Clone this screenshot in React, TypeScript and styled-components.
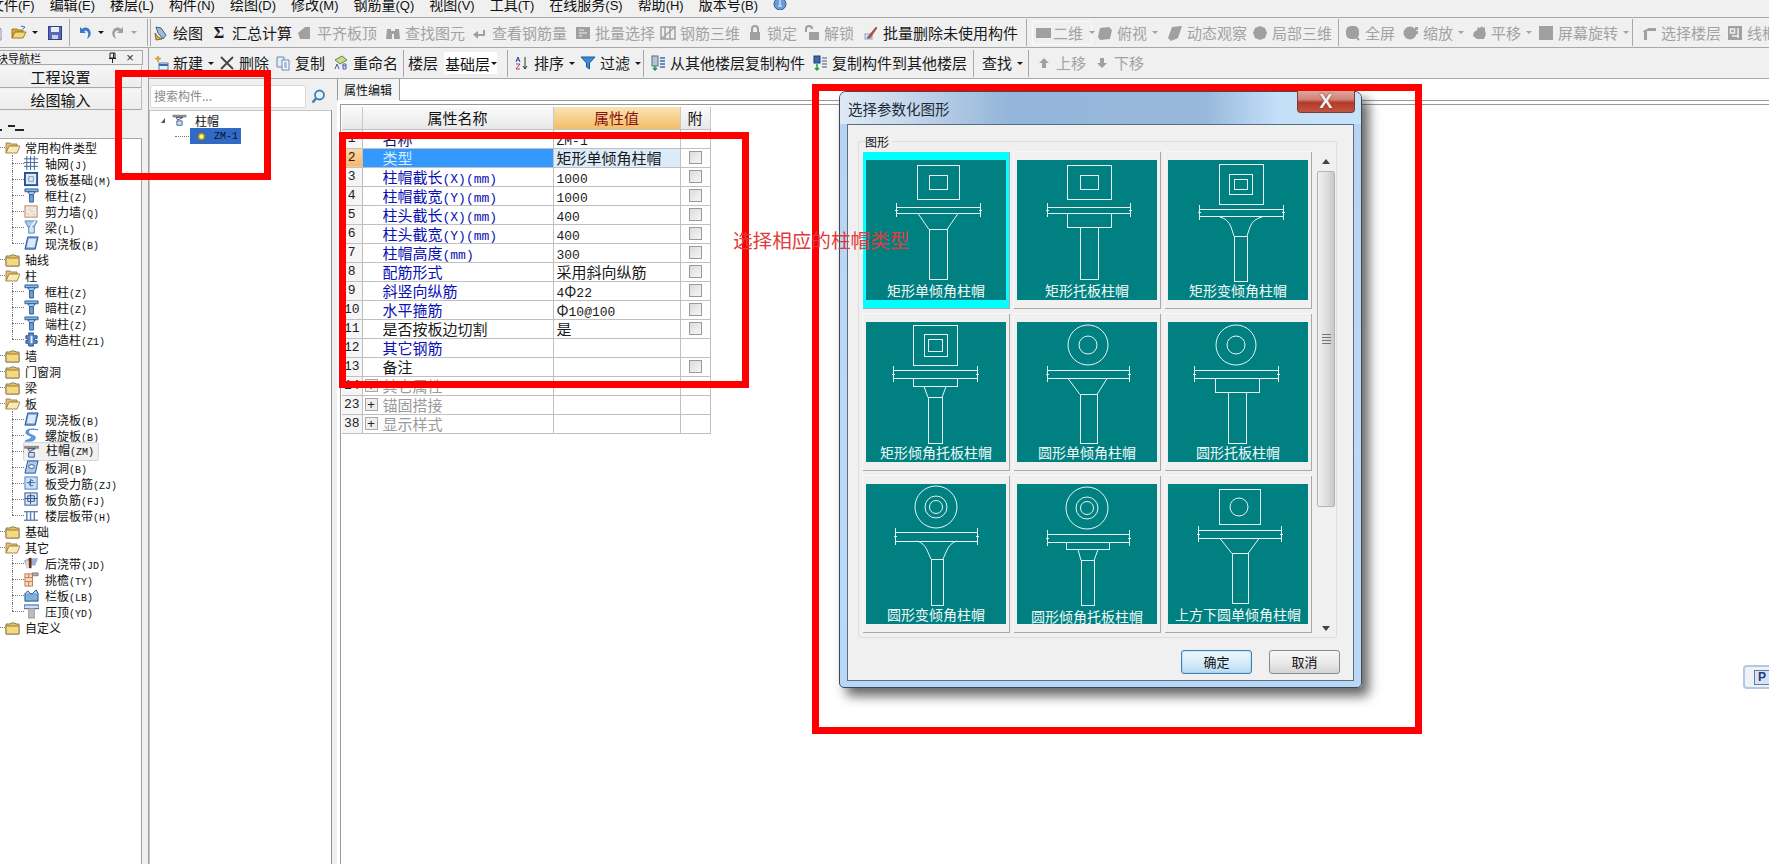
import React from 'react';
import styled, { createGlobalStyle } from 'styled-components';

const GlobalStyle = createGlobalStyle`
  html, body { margin: 0; padding: 0; background: #fff; }
  body { font-family: "Noto Sans CJK SC", "Liberation Sans", sans-serif; color: #111; }
  * { box-sizing: border-box; }
`;

const Page = styled.div`
  position: relative;
  width: 1769px;
  height: 864px;
  overflow: hidden;
  background: #f0f0f0;
`;

/* ---------- menu ---------- */
const MenuBar = styled.div`
  height: 17px;
  overflow: hidden;
  display: flex;
  margin-left: -10px;
  font-size: 14px;
  line-height: 18px;
`;

const MenuItem = styled.span`
  margin-top: -5px;
  margin-right: 15px;
  white-space: nowrap;
`;

const Latin = styled.span<{ $size: number }>`
  font-family: "Liberation Mono", monospace;
  font-size: ${p => p.$size}px;
`;

const MenuLatin = styled.span`
  font-family: "Liberation Sans", sans-serif;
  font-size: 13px;
`;

/* ---------- toolbars ---------- */
const Toolbar = styled.div<{ $h: number }>`
  display: flex;
  align-items: center;
  height: ${p => p.$h}px;
  border-top: 1px solid #a8a8a8;
  border-bottom: 1px solid #a8a8a8;
  white-space: nowrap;
  overflow: hidden;
`;

const TopToolbar = styled(Toolbar)`
  & > :first-child { margin-left: -12px; }
`;

const SubToolbar = styled(Toolbar)`
  border-top: 0;
  padding-left: 4px;
`;

const ToolItem = styled.div<{ $w: number; $muted?: boolean }>`
  flex: none;
  display: flex;
  align-items: center;
  gap: 4px;
  width: ${p => p.$w}px;
  font-size: 15px;
  line-height: 20px;
  color: ${p => (p.$muted ? '#a2a2a2' : '#1a1a1a')};
`;

const MiniSvg = styled.svg`
  flex: none;
  display: block;
`;

const Caret = styled.i`
  display: block;
  flex: none;
  width: 0;
  height: 0;
  margin-left: 1px;
  border-left: 3px solid transparent;
  border-right: 3px solid transparent;
  border-top: 3px solid currentColor;
`;

const WideCaret = styled(Caret)`
  margin-left: 5px;
`;

const Sep = styled.div<{ $w: number; $double?: boolean }>`
  flex: none;
  width: ${p => p.$w}px;
  height: 27px;
  border-left: 1px solid #a8a8a8;
  ${p => p.$double && 'box-shadow: inset 2px 0 0 #f0f0f0, inset 3px 0 0 #a8a8a8;'}
`;

const ViewBox = styled(ToolItem)`
  height: 24px;
  padding-left: 3px;
  margin-right: 5px;
  gap: 1px;
  border: 1px solid #fafafa;
  border-radius: 2px;
`;

const Combo = styled.div`
  flex: none;
  display: flex;
  align-items: center;
  justify-content: space-between;
  width: 53px;
  height: 22px;
  margin-right: 10px;
  padding: 0 2px 0 1px;
  background: #fff;
  font-size: 15px;
`;

const SigmaMark = styled.span`
  flex: none;
  width: 14px;
  margin-right: 2px;
  font-family: "Liberation Serif", serif;
  font-size: 16px;
  font-weight: 700;
  text-align: center;
`;

/* ---------- workspace ---------- */
const Workspace = styled.div`
  display: flex;
  height: 817px;
`;

const Nav = styled.aside`
  flex: none;
  width: 149px;
  display: flex;
  flex-direction: column;
  padding-top: 1px;
  border-right: 1px solid #a0a0a0;
`;

const NavTitle = styled.div`
  display: flex;
  align-items: center;
  width: 143px;
  height: 15px;
  margin-top: 1px;
  overflow: hidden;
  border: 1px solid #a8a8a8;
  border-left: 0;
  font-size: 11px;
  padding-right: 3px;
`;

const NavTitleText = styled.span`
  flex: 1;
  margin-left: -3px;
`;

const NavTitleMark = styled.span`
  display: flex;
  align-items: center;
  justify-content: center;
  width: 18px;
  font-family: "Liberation Sans", sans-serif;
  font-size: 13px;
  color: #333;
`;

const NavButton = styled.div<{ $h: number }>`
  width: 142px;
  height: ${p => p.$h}px;
  margin-top: 1px;
  padding-right: 20px;
  text-align: center;
  font-size: 15px;
  line-height: ${p => p.$h}px;
  border-bottom: 1px solid #a8a8a8;
  border-right: 1px solid #bbb;
  background: linear-gradient(#f6f6f6, #ececec);
`;

const NavTools = styled.div`
  display: flex;
  align-items: flex-end;
  width: 142px;
  height: 29px;
  padding-bottom: 7px;
  border-bottom: 1px solid #a8a8a8;
`;

const NavToolMark = styled.i<{ $w: number; $left: number; $lift?: number }>`
  display: block;
  width: ${p => p.$w}px;
  height: 2px;
  margin-left: ${p => p.$left}px;
  margin-bottom: ${p => p.$lift ?? 0}px;
  background: #223;
`;

const NavTree = styled.div`
  flex: 1;
  width: 142px;
  background: #fff;
  border-right: 1px solid #a0a0a0;
  font-size: 12px;
`;

const TreeRow = styled.div<{ $leaf?: boolean; $last?: boolean }>`
  position: relative;
  display: flex;
  align-items: center;
  height: 16px;
  padding-left: ${p => (p.$leaf ? 24 : 5)}px;
  gap: ${p => (p.$leaf ? 6 : 5)}px;
  white-space: nowrap;
  &::before {
    content: '';
    position: absolute;
    top: 8px;
    left: ${p => (p.$leaf ? 12 : 0)}px;
    width: ${p => (p.$leaf ? 12 : 5)}px;
    border-top: 1px dotted #777;
  }
  ${p =>
    p.$leaf &&
    `&::after {
      content: '';
      position: absolute;
      left: 12px;
      top: 0;
      height: ${p.$last ? 8 : 16}px;
      border-left: 1px dotted #777;
    }`}
`;

const TreeLabel = styled.span<{ $active?: boolean }>`
  ${p =>
    p.$active &&
    `margin-left: -22px;
     padding: 0 4px 0 22px;
     line-height: 14px;
     background: #f0f0f0;
     border: 1px solid #d6d6d6;
     border-radius: 2px;`}
`;

const TreeIconSlot = styled.svg`
  position: relative;
  z-index: 1;
  display: block;
  flex: none;
`;

const Main = styled.div`
  flex: 1;
  min-width: 0;
  display: flex;
  flex-direction: column;
`;

const Panels = styled.div`
  flex: 1;
  display: flex;
`;

const Components = styled.section`
  flex: none;
  width: 183px;
  display: flex;
  flex-direction: column;
  padding-top: 4px;
`;

const SearchRow = styled.div`
  display: flex;
  align-items: center;
  height: 27px;
  padding-left: 1px;
`;

const SearchBox = styled.div`
  width: 156px;
  height: 23px;
  padding-left: 3px;
  background: #fff;
  border: 1px solid #d8d8d8;
  border-radius: 2px;
  color: #8a8a8a;
  font-size: 12px;
  line-height: 20px;
`;

const SearchIcon = styled.svg`
  margin-left: 5px;
`;

const ComponentTree = styled.div`
  flex: 1;
  background: #fff;
  border: 1px solid #c4c4c4;
  border-right-color: #909090;
  font-size: 12px;
`;

const RootRow = styled.div`
  display: flex;
  align-items: center;
  height: 16px;
  margin-top: 1px;
  padding-left: 11px;
  gap: 4px;
`;

const RootName = styled.span`
  margin-left: 3px;
`;

const Expander = styled.i`
  display: block;
  width: 0;
  height: 0;
  margin-right: 2px;
  border-left: 4px solid transparent;
  border-bottom: 5px solid #555;
`;

const ChildRow = styled.div`
  position: relative;
  display: flex;
  align-items: center;
  height: 16px;
  margin-left: 40px;
  width: 51px;
  padding-left: 5px;
  gap: 6px;
  background: #316ac5;
  color: #0b0f33;
  &::before {
    content: '';
    position: absolute;
    left: -15px;
    width: 14px;
    top: 8px;
    border-top: 1px dotted #777;
  }
`;

const Properties = styled.section`
  flex: 1;
  min-width: 0;
  margin-left: 5px;
  display: flex;
  flex-direction: column;
  background: #fff;
`;

const TabStrip = styled.div`
  height: 22px;
  background: #fff;
  border-bottom: 1px solid #999;
`;

const Tab = styled.div`
  width: 63px;
  height: 22px;
  padding-left: 6px;
  font-size: 12px;
  line-height: 21px;
  background: #f4f4f4;
  border: 1px solid #999;
  border-top: 0;
  border-bottom: 1px solid #fff;
`;

const TableFrame = styled.div`
  flex: 1;
  margin: 3px 0 0 3px;
  padding: 2px 0 0 1px;
  border-top: 1px solid #999;
  border-left: 1px solid #999;
`;

const Table = styled.table`
  border-collapse: collapse;
  table-layout: fixed;
  width: 368px;
`;

const HeadCell = styled.th<{ $value?: boolean }>`
  height: 22px;
  padding: 0;
  font-size: 15px;
  font-weight: 400;
  line-height: 20px;
  color: ${p => (p.$value ? '#8c1010' : '#111')};
  background: ${p => (p.$value ? 'linear-gradient(#f9e3b4, #f2bd66)' : 'linear-gradient(#fafafa, #e8e8e8)')};
  border-right: 1px solid #c8c8c8;
  border-bottom: 1px solid #c0c0c0;
`;

const CellText = styled.div`
  height: 18px;
  overflow: hidden;
  white-space: nowrap;
  font-size: 15px;
  line-height: 18px;
`;

const NumCell = styled.td<{ $on?: boolean }>`
  height: 19px;
  padding: 0;
  overflow: hidden;
  text-align: center;
  font-family: "Liberation Mono", monospace;
  font-size: 13px;
  line-height: 18px;
  color: #222;
  background: ${p => (p.$on ? 'linear-gradient(#fbd9a6, #f5b76a)' : '#f5f5f5')};
  border: 1px solid #c0c0c0;
  border-left: 0;
`;

const NameCell = styled.td<{ $tone: string; $on?: boolean }>`
  height: 19px;
  padding: 0 0 0 20px;
  overflow: hidden;
  color: ${p => (p.$on ? '#d8ecff' : p.$tone)};
  background: ${p => (p.$on ? '#3399ff' : '#fff')};
  border: 1px solid #c0c0c0;
`;

const GroupNameCell = styled(NameCell)`
  padding-left: 2px;
`;

const GroupInner = styled(CellText)`
  display: flex;
  align-items: center;
  gap: 5px;
`;

const PlusBox = styled.span`
  flex: none;
  width: 13px;
  height: 13px;
  font-family: "Liberation Sans", sans-serif;
  font-size: 13px;
  line-height: 11px;
  text-align: center;
  color: #222;
  background: #eee;
  border: 1px solid #a8a8a8;
`;

const ValueCell = styled.td<{ $on?: boolean }>`
  height: 19px;
  padding: 0 0 0 3px;
  overflow: hidden;
  color: #1a1a1a;
  background: ${p => (p.$on ? '#dcebfa' : '#fff')};
  border: 1px solid #c0c0c0;
`;

const CheckCell = styled.td`
  height: 19px;
  padding: 0;
  border: 1px solid #c0c0c0;
`;

const CheckBox = styled.i`
  display: block;
  width: 13px;
  height: 13px;
  margin: 0 auto;
  border: 1px solid #9a9a9a;
  background: linear-gradient(135deg, #dcdcdc, #f6f6f6);
`;

/* ---------- dialog ---------- */
const Dialog = styled.div`
  position: absolute;
  z-index: 1;
  left: 839px;
  top: 91px;
  width: 523px;
  height: 597px;
  display: flex;
  flex-direction: column;
  padding: 0 7px 6px;
  border: 1px solid #3c4a58;
  border-radius: 7px 7px 5px 5px;
  background: linear-gradient(180deg, #b7d3ef 0, #bcd9f7 60%, #b9d8f8 100%);
  box-shadow: 7px 8px 12px rgba(0, 0, 0, 0.6);
`;

const DialogTitle = styled.div`
  position: relative;
  flex: none;
  height: 32px;
  margin: 0 -7px;
  padding: 7px 0 0 8px;
  border-radius: 6px 6px 0 0;
  font-size: 14.5px;
  line-height: 20px;
  color: #1c2a38;
  background: linear-gradient(90deg, #dfeaf5 0, #c3d6ea 14%, #94b6da 32%, #97b8db 70%, #c4dff8 84%, #c6e1fa 100%);
`;

const CloseButton = styled.div`
  position: absolute;
  top: -1px;
  right: 6px;
  width: 58px;
  height: 22px;
  font-family: "Liberation Sans", sans-serif;
  font-weight: 700;
  font-size: 20px;
  line-height: 20px;
  text-align: center;
  color: #f0f0f0;
  text-shadow: 0 0 2px #6b2018;
  background: linear-gradient(#dca79f 0, #d08478 40%, #b53a28 55%, #c25443 100%);
  border: 1px solid #7d3a32;
  border-top: 0;
  border-radius: 0 0 4px 4px;
`;

const DialogBody = styled.div`
  flex: 1;
  display: flex;
  flex-direction: column;
  padding: 16px 0 0 10px;
  background: #f0f0f0;
  border: 1px solid #5b6f83;
`;

const GroupBox = styled.div`
  width: 479px;
  height: 497px;
  border: 1px solid #dedede;
  border-radius: 2px;
  padding: 0 2px 0 4px;
`;

const GroupLegend = styled.div`
  height: 11px;
  margin: -8px 0 0 2px;
  width: 28px;
  font-size: 12px;
  line-height: 16px;
  background: #f0f0f0;
`;

const GroupContent = styled.div`
  display: flex;
  gap: 5px;
  padding-top: 7px;
`;

const ShapeGrid = styled.div`
  display: grid;
  grid-template-columns: repeat(3, 147px);
  grid-auto-rows: 157px;
  gap: 5px 4px;
`;

const ShapeCell = styled.div<{ $picked?: boolean }>`
  padding: 8px 3px 9px;
  background: ${p => (p.$picked ? '#00ffff' : '#f0f0f0')};
  border-right: 1px solid #a9a9a9;
  border-bottom: 1px solid #a9a9a9;
  box-shadow: -1px -1px 0 #f8f8f8;
`;

const ShapeTile = styled.div`
  width: 140px;
  height: 140px;
  background: #008080;
`;

const ShapeSvg = styled.svg`
  display: block;
  fill: none;
  stroke: #e9f5f5;
  stroke-width: 1;
`;

const ShapeCaption = styled.div<{ $drop?: number }>`
  height: 18px;
  margin-top: ${p => p.$drop ?? 0}px;
  text-align: center;
  white-space: nowrap;
  font-size: 14px;
  line-height: 16px;
  color: #f0fafa;
`;

const ScrollBar = styled.div`
  flex: none;
  display: flex;
  flex-direction: column;
  align-items: center;
  width: 18px;
  height: 486px;
`;

const ScrollArrow = styled.div<{ $down?: boolean }>`
  flex: none;
  width: 18px;
  height: 19px;
  display: flex;
  align-items: center;
  justify-content: center;
  margin-top: ${p => (p.$down ? 'auto' : 0)};
  &::before {
    content: '';
    border-left: 4px solid transparent;
    border-right: 4px solid transparent;
    ${p => (p.$down ? 'border-top: 5px solid #444;' : 'border-bottom: 5px solid #444;')}
  }
`;

const ScrollThumb = styled.div`
  display: flex;
  align-items: center;
  justify-content: center;
  width: 18px;
  height: 336px;
  background: linear-gradient(90deg, #f0f0f0, #e0e0e0 50%, #c8c8c8);
  border: 1px solid #b4b4b4;
  border-radius: 2px;
`;

const ThumbGrip = styled.div`
  width: 9px;
  height: 10px;
  background: repeating-linear-gradient(#777 0 1px, transparent 1px 3px);
`;

const DialogActions = styled.div`
  display: flex;
  justify-content: flex-end;
  gap: 17px;
  margin-top: 12px;
  padding-right: 13px;
`;

const DialogButton = styled.div<{ $primary?: boolean }>`
  width: 71px;
  height: 24px;
  text-align: center;
  font-size: 13px;
  line-height: 22px;
  border-radius: 3px;
  border: 1px solid ${p => (p.$primary ? '#3c7fb1' : '#8a8a8a')};
  background: ${p =>
    p.$primary ? 'linear-gradient(#f0f8fd, #d8ecf8 50%, #b8dcf2)' : 'linear-gradient(#f6f6f6, #ebebeb 50%, #d4d4d4)'};
  box-shadow: ${p => (p.$primary ? 'inset 0 0 2px #7cc4ee' : 'none')};
`;

/* ---------- annotations ---------- */
const RedFrame = styled.div<{ $l: number; $t: number; $w: number; $h: number }>`
  position: absolute;
  z-index: 2;
  left: ${p => p.$l}px;
  top: ${p => p.$t}px;
  width: ${p => p.$w}px;
  height: ${p => p.$h}px;
  border: 7px solid #fe0000;
`;

const RedNote = styled.div`
  position: absolute;
  z-index: 3;
  left: 733px;
  top: 226px;
  font-size: 19.6px;
  line-height: 28px;
  white-space: nowrap;
  color: #e23a3a;
`;

const PinBadge = styled.div`
  position: absolute;
  right: -6px;
  top: 665px;
  display: flex;
  align-items: center;
  width: 32px;
  height: 24px;
  padding-left: 9px;
  background: #eef2f7;
  border: 2px solid #b4c8e0;
  border-radius: 4px;
`;

const PinMark = styled.span`
  display: block;
  width: 16px;
  height: 15px;
  font-family: "Liberation Sans", sans-serif;
  font-size: 12px;
  font-weight: 700;
  line-height: 13px;
  text-align: center;
  color: #1d3c78;
  background: #d7e3f2;
  border: 1px solid #5e7ca8;
`;

/* ---------- helpers ---------- */
const mixed = (text: string, size: number) =>
  text.split(/([\x20-\x7e]+)/).map((part, i) =>
    /^[\x20-\x7e]+$/.test(part) ? (
      <Latin key={i} $size={size}>
        {part}
      </Latin>
    ) : (
      part
    )
  );

const Mini = ({ children }: { children: React.ReactNode }) => (
  <MiniSvg width={16} height={16} viewBox="0 0 16 16">
    {children}
  </MiniSvg>
);

const G = '#a0a0a0';

// toolbar glyphs
const toolIcons: Record<string, React.ReactNode> = {
  doc: <><path d="M3 1h7l3 3v11H3z" fill="#fff" stroke="#7b8fa8" /><path d="M5 7h6M5 10h6" stroke="#7b8fa8" /></>,
  open: <><path d="M1 13V4h5l1 1h5v2H4l-3 6z" fill="#d9a93a" stroke="#a07a20" /><path d="M1 13l3-6h11l-3 6z" fill="#f5d77a" stroke="#a07a20" /><path d="M10 1l4 1-2 2" stroke="#3668b0" fill="none" /></>,
  save: <><rect x="1.5" y="1.5" width="13" height="13" fill="#5a66b8" stroke="#34407c" /><rect x="4" y="2" width="8" height="5" fill="#e8ecf8" /><rect x="5" y="10" width="6" height="4" fill="#c8d0e8" /></>,
  undo: <path d="M3 2v6h6L7 6c3-1 5 1 4 5l-1 3c4-2 5-7 2-10-2-2-5-2-7 0z" fill="#3f78c8" />,
  redo: <path d="M13 2v6H7l2-2C6 5 4 7 5 11l1 3C2 12 1 7 4 4c2-2 5-2 7 0z" fill={G} />,
  draw: <><path d="M3 2l5 1 5 7-3 4-5-6z" fill="#9fb9d8" stroke="#40608c" /><path d="M2 8l3 4 4 2-6 1z" fill="#e0b040" stroke="#8a6a20" /></>,
  align: <path d="M1 8l7-6h5v12H3z" fill={G} />,
  binoc: <path d="M2 4h4v2h4V4h4l1 10H9V9H7v5H1z" fill={G} />,
  arrow: <path d="M13 5v6H6v3L1 9.5 6 6v3h5V5z" fill={G} />,
  batch: <><rect x="1" y="2" width="14" height="12" fill={G} /><path d="M4 5h5M4 8h8M4 11h3" stroke="#f0f0f0" /></>,
  cube: <><rect x="1" y="2" width="14" height="12" fill="none" stroke={G} strokeWidth="1.5" /><path d="M1 14L15 2M5 2v12M10 2v12" stroke={G} strokeWidth="1.5" /></>,
  lock: <><path d="M5 7V4a3 3 0 016 0v3" fill="none" stroke={G} strokeWidth="2" /><rect x="3" y="7" width="10" height="8" fill={G} /></>,
  unlock: <><path d="M2 7V4a3 3 0 016 0" fill="none" stroke={G} strokeWidth="2" /><rect x="5" y="7" width="10" height="8" fill={G} /></>,
  brush: <><rect x="2" y="9" width="7" height="5" fill="#d8e4f4" stroke="#8aa0c0" /><path d="M4 13L13 2l1 1-7 10z" fill="#c05040" stroke="#6a3020" strokeWidth=".5" /></>,
  flat: <rect x="0" y="3" width="15" height="10" fill={G} />,
  top: <path d="M3 3l9-1 3 3-2 9-10 1-2-3z" fill={G} />,
  orbit: <path d="M5 2l10-1-4 12-7 3-3-3z" fill={G} />,
  part: <path d="M8 1l5 2 2 5-2 5-5 2-5-2-2-5 2-5z" fill={G} />,
  full: <><rect x="1" y="1" width="13" height="13" rx="5" fill={G} /><path d="M11 12l3 3" stroke={G} strokeWidth="2" /></>,
  zoom: <><circle cx="7" cy="8" r="6.5" fill={G} /><path d="M12 2h3v3h-3zM12 6h3v3h-3z" fill={G} /></>,
  pan: <path d="M3 7l3-2 1-3 2 1 2-2 1 2 2-1v4l1 3-2 5H6L2 11z" fill={G} />,
  rotate: <rect x="1" y="1" width="14" height="14" fill={G} />,
  floor: <path d="M2 6l6-3h7v3H6v9H3V8z" fill={G} />,
  wire: <><rect x="1" y="1" width="14" height="14" fill={G} /><rect x="3.5" y="4" width="4" height="4" fill="none" stroke="#f0f0f0" strokeWidth="1.5" /><path d="M11 3v10M5 11h7" stroke="#f0f0f0" strokeWidth="1.5" /></>,
  add: <><path d="M5 1l1 2 2 .5-2 1L5 7 4 4.500 2 3.500 4 3z" fill="#e8b020" stroke="#a87a10" strokeWidth=".5" /><rect x="6" y="8" width="9" height="7" fill="#e8f0f8" stroke="#5a7aa8" /><path d="M6 10h9" stroke="#3a6ab0" strokeWidth="2" /></>,
  cross: <path d="M2 2l12 12M14 2L2 14" stroke="#444" strokeWidth="1.8" />,
  copy: <><path d="M2 2h7v10H2z" fill="#e4ecf6" stroke="#6a8ab8" /><path d="M7 5h7v10H7z" fill="#f4f8fc" stroke="#6a8ab8" /><path d="M9 8h3M9 10h3M9 12h3" stroke="#6a8ab8" /></>,
  rename: <><path d="M2 5l7-4 5 4-7 4z" fill="#c8dc90" stroke="#708040" /><path d="M2 14l2-5 2 5M10 9h3v5h-3zM10 11h3" stroke="#3a60b0" fill="none" /></>,
  sort: <><path d="M11 2v12M9 11l2 3 2-3" stroke="#333" fill="none" /><path d="M2 7l2-5 2 5M3 5h2" stroke="#2050b0" fill="none" /><path d="M2 9h4l-4 5h4" stroke="#b04040" fill="none" /></>,
  filter: <path d="M1 2h14L9.500 8v6l-3-2V8z" fill="#3a8ad8" stroke="#205a98" />,
  fromFloor: <><rect x="2" y="1" width="6" height="10" fill="#b8c4d4" stroke="#5a6a80" /><path d="M5 11v4M3 13l2 2 2-2" stroke="#20a040" fill="none" strokeWidth="1.5" /><path d="M10 3h5M10 6h5M10 9h5M10 12h5" stroke="#3a6ab0" strokeWidth="1.5" /></>,
  toFloor: <><rect x="2" y="1" width="6" height="7" fill="#3a6ab0" stroke="#203a70" /><path d="M5 9v6M3 13l2 2 2-2" stroke="#20a040" fill="none" strokeWidth="1.5" /><path d="M10 3h5M10 6h5M10 9h5M10 12h5" stroke="#7a8a9c" strokeWidth="1.5" /></>,
  up: <path d="M8 3l5 5h-3v5H6V8H3z" fill={G} />,
  down: <path d="M8 13l5-5h-3V3H6v5H3z" fill={G} />,
};

type ToolSpec = { w: number; icon?: string; label?: string; muted?: boolean; caret?: boolean; sep?: boolean; dbl?: boolean };

const topTools: ToolSpec[] = [
  { w: 23, icon: 'doc' },
  { w: 36, icon: 'open', caret: true },
  { w: 22, icon: 'save' },
  { w: 8, sep: true },
  { w: 33, icon: 'undo', caret: true },
  { w: 37, icon: 'redo', caret: true, muted: true },
  { w: 6, sep: true, dbl: true },
  { w: 59, icon: 'draw', label: '绘图' },
  { w: 85, label: 'Σ汇总计算' },
  { w: 88, icon: 'align', label: '平齐板顶', muted: true },
  { w: 87, icon: 'binoc', label: '查找图元', muted: true },
  { w: 103, icon: 'arrow', label: '查看钢筋量', muted: true },
  { w: 85, icon: 'batch', label: '批量选择', muted: true },
  { w: 87, icon: 'cube', label: '钢筋三维', muted: true },
  { w: 57, icon: 'lock', label: '锁定', muted: true },
  { w: 59, icon: 'unlock', label: '解锁', muted: true },
  { w: 163, icon: 'brush', label: '批量删除未使用构件' },
  { w: 6, sep: true },
];

const viewTools: ToolSpec[] = [
  { w: 70, icon: 'top', label: '俯视', muted: true, caret: true },
  { w: 85, icon: 'orbit', label: '动态观察', muted: true },
  { w: 86, icon: 'part', label: '局部三维', muted: true },
  { w: 7, sep: true },
  { w: 58, icon: 'full', label: '全屏', muted: true },
  { w: 68, icon: 'zoom', label: '缩放', muted: true, caret: true },
  { w: 67, icon: 'pan', label: '平移', muted: true, caret: true },
  { w: 94, icon: 'rotate', label: '屏幕旋转', muted: true, caret: true },
  { w: 9, sep: true },
  { w: 86, icon: 'floor', label: '选择楼层', muted: true },
  { w: 60, icon: 'wire', label: '线框', muted: true },
];

const subToolsA: ToolSpec[] = [
  { w: 66, icon: 'add', label: '新建', caret: true },
  { w: 56, icon: 'cross', label: '删除' },
  { w: 58, icon: 'copy', label: '复制' },
  { w: 70, icon: 'rename', label: '重命名' },
  { w: 5, sep: true },
  { w: 36, label: '楼层' },
];

const subToolsB: ToolSpec[] = [
  { w: 7, sep: true },
  { w: 66, icon: 'sort', label: '排序', caret: true },
  { w: 63, icon: 'filter', label: '过滤', caret: true },
  { w: 7, sep: true },
  { w: 162, icon: 'fromFloor', label: '从其他楼层复制构件' },
  { w: 161, icon: 'toFloor', label: '复制构件到其他楼层' },
  { w: 9, sep: true },
  { w: 46, label: '查找', caret: true },
  { w: 8, sep: true },
  { w: 58, icon: 'up', label: '上移', muted: true },
  { w: 60, icon: 'down', label: '下移', muted: true },
];

const Tool = ({ spec }: { spec: ToolSpec }) => {
  if (spec.sep) return <Sep $w={spec.w} $double={spec.dbl} />;
  const sigma = spec.label?.startsWith('Σ');
  return (
    <ToolItem $w={spec.w} $muted={spec.muted}>
      {spec.icon && <Mini>{toolIcons[spec.icon]}</Mini>}
      {sigma && <SigmaMark>Σ</SigmaMark>}
      {spec.label && <span>{sigma ? spec.label?.slice(1) : spec.label}</span>}
      {spec.caret && <Caret />}
    </ToolItem>
  );
};

// tree glyphs
const column = (
  <>
    <path d="M1 1h14v3H1z" fill="#8ab4e0" stroke="#2a5a9c" />
    <path d="M4 4h8l-2 3H6z" fill="#b8d4f0" stroke="#2a5a9c" />
    <path d="M6 7h4v8H6z" fill="#6fa0d8" stroke="#2a5a9c" />
  </>
);
const slab = <><path d="M4 1h11l-3 13H1z" fill="#7aa4e0" stroke="#24508e" /><path d="M5 3h8l-2 9H3z" fill="#dceafa" /></>;

const treeIcons: Record<string, React.ReactNode> = {
  grid: <path d="M0 3h15M0 7h15M0 11h15M3 0v15M7 0v15M11 0v15" stroke="#3a5f9c" />,
  raft: <><rect x="1" y="1" width="13" height="13" fill="#dde8f6" stroke="#24508e" strokeWidth="2" /><rect x="5" y="5" width="5" height="5" fill="none" stroke="#24508e" strokeDasharray="1 1" /></>,
  column,
  wall: <><rect x="1" y="2" width="13" height="12" fill="#f2e8dc" stroke="#c08060" /><path d="M4 11h1M8 8h1M10 11h1M6 6h1" stroke="#999" /></>,
  beam: <><path d="M1 1h13l-3 6H4z" fill="#a8cce8" stroke="#4a88b8" /><path d="M5 7h6v7H5z" fill="#d0e4f4" stroke="#4a88b8" /><path d="M12 1L7 8" stroke="#eee" strokeWidth="2" /></>,
  slab,
  struct: <><path d="M5 1h5v3h4v3h-3v2h3v3h-4v3H5v-3H2V9h2V7H2V4h3z" fill="#5a8ac8" stroke="#24508e" /><path d="M7 4h2v8H7z" fill="#e8f0fa" /></>,
  spiral: <path d="M15 2C8 0 4 2 5 5s8 2 7 6-8 3-11 3c3-2 6-2 7-4S1 8 2 4 10 1 15 2z" fill="#5aa0e8" stroke="#2060b0" strokeWidth=".6" />,
  cap: <><path d="M0 2h16v3H0z" fill="#8c8c8c" /><path d="M4 5h8L6 8z" fill="none" stroke="#445" /><path d="M5 9h6v5H5z" fill="#cfe0f4" stroke="#2a5a9c" /></>,
  hole: <><path d="M4 1h11l-3 13H1z" fill="#a8c8f0" stroke="#24508e" /><ellipse cx="8" cy="7" rx="3" ry="2" fill="#fff" stroke="#24508e" /></>,
  rebarT: <><rect x="1" y="1" width="13" height="13" fill="#cfe0f6" stroke="#4a78c0" /><path d="M3 7h9M7 3v8M10 5a3 3 0 10 0 5" stroke="#3a68b0" fill="none" /></>,
  rebarN: <><rect x="1" y="1" width="13" height="13" fill="#dbe8f8" stroke="#24508e" /><path d="M1 7h13M4 4h7v6H4zM7 2v11" stroke="#24508e" fill="none" /></>,
  band: <><path d="M0 4h15M0 13h15" stroke="#24508e" /><path d="M3 4v9M7 4v9M11 4v9" stroke="#5a80b8" strokeWidth="1.5" /></>,
  post: <><path d="M0 5l4-2 11-1-3 8H2z" fill="#9ab0d0" /><rect x="5" y="2" width="3" height="11" fill="#703010" /><path d="M2 5h3v8H2z" fill="#d8d8d8" /></>,
  eave: <><rect x="1" y="2" width="8" height="13" fill="#f4dcc4" stroke="#c07848" /><path d="M1 6h8M1 10h8M5 2v4M5 10v5" stroke="#c07848" /><path d="M9 1h6v3H9z" fill="#b8b0a8" stroke="#807870" /></>,
  rail: <><path d="M1 6h14v8H1z" fill="#7ab0dc" stroke="#24508e" /><path d="M1 6l3-3 3 3M9 6l4-4 2 4" fill="#b8d4ec" stroke="#24508e" /></>,
  coping: <><rect x="0" y="1" width="16" height="4" fill="#cde0f6" stroke="#2a5a9c" /><rect x="5" y="5" width="6" height="10" fill="#bdbdbd" stroke="#999" /></>,
  gear: <><circle cx="7" cy="8" r="4" fill="#f4e040" stroke="#8a7a10" strokeDasharray="2 1" strokeWidth="2" /><circle cx="7" cy="8" r="1.500" fill="#fff" /></>,
};

const FolderIcon = ({ open }: { open?: boolean }) => (
  <TreeIconSlot width={15} height={15} viewBox="0 0 15 15">
    {open ? (
      <>
        <path d="M1 13V3h4l1 1h6v2H4l-3 7z" fill="#e4c070" stroke="#a08a50" />
        <path d="M1 13l3-7h11l-3 7z" fill="#fbeab0" stroke="#a08a50" />
      </>
    ) : (
      <>
        <path d="M1 4h4l1-1h4l1 1h3v10H1z" fill="#e8c050" stroke="#8a8068" />
        <path d="M1 6h13v8H1z" fill="#f7d978" stroke="#8a8068" />
      </>
    )}
  </TreeIconSlot>
);

type TreeSpec = { label: string; folder?: 'open' | 'shut'; icon?: string; last?: boolean; active?: boolean };

const treeRows: TreeSpec[] = [
  { label: '常用构件类型', folder: 'open' },
  { label: '轴网(J)', icon: 'grid' },
  { label: '筏板基础(M)', icon: 'raft' },
  { label: '框柱(Z)', icon: 'column' },
  { label: '剪力墙(Q)', icon: 'wall' },
  { label: '梁(L)', icon: 'beam' },
  { label: '现浇板(B)', icon: 'slab', last: true },
  { label: '轴线', folder: 'shut' },
  { label: '柱', folder: 'open' },
  { label: '框柱(Z)', icon: 'column' },
  { label: '暗柱(Z)', icon: 'column' },
  { label: '端柱(Z)', icon: 'column' },
  { label: '构造柱(Z1)', icon: 'struct', last: true },
  { label: '墙', folder: 'shut' },
  { label: '门窗洞', folder: 'shut' },
  { label: '梁', folder: 'shut' },
  { label: '板', folder: 'open' },
  { label: '现浇板(B)', icon: 'slab' },
  { label: '螺旋板(B)', icon: 'spiral' },
  { label: '柱帽(ZM)', icon: 'cap', active: true },
  { label: '板洞(B)', icon: 'hole' },
  { label: '板受力筋(ZJ)', icon: 'rebarT' },
  { label: '板负筋(FJ)', icon: 'rebarN' },
  { label: '楼层板带(H)', icon: 'band', last: true },
  { label: '基础', folder: 'shut' },
  { label: '其它', folder: 'open' },
  { label: '后浇带(JD)', icon: 'post' },
  { label: '挑檐(TY)', icon: 'eave' },
  { label: '栏板(LB)', icon: 'rail' },
  { label: '压顶(YD)', icon: 'coping', last: true },
  { label: '自定义', folder: 'shut' },
];

const BLUE = '#0a10b4';
const BLACK = '#1a1a1a';
const GREY = '#9a9a9a';

type PropRow = { n: string; name: string; tone: string; value?: string; check?: boolean; on?: boolean; group?: boolean };

const propRows: PropRow[] = [
  { n: '1', name: '名称', tone: '#101060', value: 'ZM-1' },
  { n: '2', name: '类型', tone: BLUE, value: '矩形单倾角柱帽', check: true, on: true },
  { n: '3', name: '柱帽截长(X)(mm)', tone: BLUE, value: '1000', check: true },
  { n: '4', name: '柱帽截宽(Y)(mm)', tone: BLUE, value: '1000', check: true },
  { n: '5', name: '柱头截长(X)(mm)', tone: BLUE, value: '400', check: true },
  { n: '6', name: '柱头截宽(Y)(mm)', tone: BLUE, value: '400', check: true },
  { n: '7', name: '柱帽高度(mm)', tone: BLUE, value: '300', check: true },
  { n: '8', name: '配筋形式', tone: BLUE, value: '采用斜向纵筋', check: true },
  { n: '9', name: '斜竖向纵筋', tone: BLUE, value: '4Φ22', check: true },
  { n: '10', name: '水平箍筋', tone: BLUE, value: 'Φ10@100', check: true },
  { n: '11', name: '是否按板边切割', tone: BLACK, value: '是', check: true },
  { n: '12', name: '其它钢筋', tone: BLUE },
  { n: '13', name: '备注', tone: BLACK, check: true },
  { n: '14', name: '其它属性', tone: GREY, group: true },
  { n: '23', name: '锚固搭接', tone: GREY, group: true },
  { n: '38', name: '显示样式', tone: GREY, group: true },
];

// parametric cap drawings, coordinates in tile pixels
const Slab = ({ x1, x2, y1, y2 }: { x1: number; x2: number; y1: number; y2: number }) => (
  <>
    <path d={`M${x1} ${y1}.5H${x2}M${x1} ${y2}.5H${x2}`} />
    <path d={`M${x1}.5 ${y1 - 4}V${y2 + 4}M${x2}.5 ${y1 - 4}V${y2 + 4}`} />
    <path d={`M${x1 - 1} ${(y1 + y2) >> 1}.5h3M${x2 - 1} ${(y1 + y2) >> 1}.5h3`} />
  </>
);

const Box = ({ x, y, X, Y }: { x: number; y: number; X: number; Y: number }) => (
  <rect x={x + 0.5} y={y + 0.5} width={X - x} height={Y - y} />
);

const shapes: { caption: string; drop?: number; art: React.ReactNode }[] = [
  {
    caption: '矩形单倾角柱帽',
    art: (
      <>
        <Box x={51} y={5} X={93} Y={39} />
        <Box x={63} y={15} X={81} Y={29} />
        <Slab x1={30} x2={114} y1={47} y2={53} />
        <path d="M52 53.500L63 69.500M92 53.500L81 69.500" />
        <Box x={63} y={69} X={81} Y={119} />
      </>
    ),
  },
  {
    caption: '矩形托板柱帽',
    art: (
      <>
        <Box x={50} y={5} X={94} Y={39} />
        <Box x={63} y={15} X={81} Y={29} />
        <Slab x1={30} x2={113} y1={47} y2={53} />
        <Box x={50} y={53} X={94} Y={67} />
        <Box x={63} y={67} X={81} Y={119} />
      </>
    ),
  },
  {
    caption: '矩形变倾角柱帽',
    art: (
      <>
        <Box x={51} y={4} X={95} Y={44} />
        <Box x={61} y={14} X={84} Y={34} />
        <Box x={66} y={19} X={79} Y={29} />
        <Slab x1={31} x2={115} y1={49} y2={56} />
        <path d="M52 57Q60 59 63 67L66 76M94 57Q85 59 82 67L79 76" />
        <Box x={66} y={76} X={79} Y={121} />
      </>
    ),
  },
  {
    caption: '矩形倾角托板柱帽',
    art: (
      <>
        <Box x={47} y={3} X={91} Y={43} />
        <Box x={58} y={12} X={81} Y={34} />
        <Box x={62} y={17} X={76} Y={29} />
        <Slab x1={27} x2={111} y1={48} y2={56} />
        <Box x={47} y={56} X={91} Y={64} />
        <path d="M58 64.500L62 75.500M80 64.500L76 75.500" />
        <Box x={62} y={75} X={76} Y={121} />
      </>
    ),
  },
  {
    caption: '圆形单倾角柱帽',
    art: (
      <>
        <circle cx={71} cy={23} r={20} />
        <circle cx={71} cy={23} r={9} />
        <Slab x1={30} x2={112} y1={48} y2={56} />
        <path d="M51 56.500L63 72.500M90 56.500L80 72.500" />
        <Box x={63} y={72} X={80} Y={121} />
      </>
    ),
  },
  {
    caption: '圆形托板柱帽',
    art: (
      <>
        <circle cx={68} cy={23} r={20} />
        <circle cx={68} cy={23} r={9} />
        <Slab x1={26} x2={110} y1={48} y2={56} />
        <Box x={47} y={56} X={91} Y={70} />
        <Box x={60} y={70} X={78} Y={121} />
      </>
    ),
  },
  {
    caption: '圆形变倾角柱帽',
    art: (
      <>
        <circle cx={70} cy={23} r={21} />
        <circle cx={70} cy={23} r={11} />
        <circle cx={70} cy={23} r={6.5} />
        <Slab x1={29} x2={111} y1={48} y2={57} />
        <path d="M51 57Q58 59 61 66L65 75M91 57Q84 59 81 66L77 75" />
        <Box x={65} y={75} X={77} Y={121} />
      </>
    ),
  },
  {
    caption: '圆形倾角托板柱帽',
    drop: 2,
    art: (
      <>
        <circle cx={70} cy={24} r={21} />
        <circle cx={70} cy={24} r={11} />
        <circle cx={70} cy={24} r={6.5} />
        <Slab x1={30} x2={112} y1={50} y2={58} />
        <Box x={49} y={58} X={92} Y={65} />
        <path d="M61 65.500L64 76.500M81 65.500L77 76.500" />
        <Box x={64} y={76} X={77} Y={121} />
      </>
    ),
  },
  {
    caption: '上方下圆单倾角柱帽',
    art: (
      <>
        <Box x={51} y={5} X={92} Y={40} />
        <circle cx={71} cy={23} r={9} />
        <Slab x1={30} x2={113} y1={46} y2={54} />
        <path d="M52 54.500L64 69.500M91 54.500L80 69.500" />
        <Box x={64} y={69} X={80} Y={119} />
      </>
    ),
  },
];

const menu = ['文件(F)', '编辑(E)', '楼层(L)', '构件(N)', '绘图(D)', '修改(M)', '钢筋量(Q)', '视图(V)', '工具(T)', '在线服务(S)', '帮助(H)', '版本号(B)'];

export default function App() {
  return (
    <>
      <GlobalStyle />
      <Page>
        <MenuBar>
          {menu.map(m => {
            const [cjk, key] = m.split('(');
            return (
              <MenuItem key={m}>
                {cjk}
                <MenuLatin>({key}</MenuLatin>
              </MenuItem>
            );
          })}
          <MenuItem>
            <svg width={15} height={14} viewBox="0 0 15 14">
              <circle cx="7" cy="8" r="6" fill="#6a9ad8" stroke="#2a5a9c" />
              <path d="M7 4v5M5 10h4" stroke="#fff" />
            </svg>
          </MenuItem>
        </MenuBar>

        <TopToolbar $h={31}>
          {topTools.map((t, i) => (
            <Tool key={i} spec={t} />
          ))}
          <ViewBox $w={60} $muted>
            <Mini>{toolIcons.flat}</Mini>
            <span>二维</span>
            <WideCaret />
          </ViewBox>
          {viewTools.map((t, i) => (
            <Tool key={i} spec={t} />
          ))}
        </TopToolbar>

        <Workspace>
          <Nav>
            <NavTitle>
              <NavTitleText>块导航栏</NavTitleText>
              <NavTitleMark>
                <svg width={9} height={11} viewBox="0 0 9 11">
                  <path d="M2 1h5v5H2zM1 6.500h7M4.500 7v4M5.500 1v5" stroke="#222" fill="none" />
                </svg>
              </NavTitleMark>
              <NavTitleMark>×</NavTitleMark>
            </NavTitle>
            <NavButton $h={22}>工程设置</NavButton>
            <NavButton $h={21}>绘图输入</NavButton>
            <NavTools>
              <NavToolMark $w={2} $left={0} />
              <NavToolMark $w={7} $left={6} $lift={4} />
              <NavToolMark $w={9} $left={0} />
            </NavTools>
            <NavTree>
              {treeRows.map((r, i) => (
                <TreeRow key={i} $leaf={!r.folder} $last={r.last}>
                  {r.folder ? (
                    <FolderIcon open={r.folder === 'open'} />
                  ) : (
                    <TreeIconSlot width={15} height={15} viewBox="0 0 16 16">
                      {treeIcons[r.icon!]}
                    </TreeIconSlot>
                  )}
                  <TreeLabel $active={r.active}>{mixed(r.label, 10)}</TreeLabel>
                </TreeRow>
              ))}
            </NavTree>
          </Nav>

          <Main>
            <SubToolbar $h={31}>
              {subToolsA.map((t, i) => (
                <Tool key={i} spec={t} />
              ))}
              <Combo>
                <span>基础层</span>
                <Caret />
              </Combo>
              {subToolsB.map((t, i) => (
                <Tool key={i} spec={t} />
              ))}
            </SubToolbar>
            <Panels>
              <Components>
                <SearchRow>
                  <SearchBox>搜索构件...</SearchBox>
                  <SearchIcon width={15} height={15} viewBox="0 0 15 15">
                    <circle cx="8.500" cy="6" r="4.500" fill="#e8f2fa" stroke="#3a80b8" strokeWidth="1.800" />
                    <path d="M5 9.500L1.500 13.500" stroke="#3a80b8" strokeWidth="2.500" />
                  </SearchIcon>
                </SearchRow>
                <ComponentTree>
                  <RootRow>
                    <Expander />
                    <svg width={17} height={14} viewBox="0 0 16 16">{treeIcons.cap}</svg>
                    <RootName>柱帽</RootName>
                  </RootRow>
                  <ChildRow>
                    <MiniSvg width={13} height={13} viewBox="0 0 14 16">
                      {treeIcons.gear}
                    </MiniSvg>
                    <Latin $size={10}>ZM-1</Latin>
                  </ChildRow>
                </ComponentTree>
              </Components>

              <Properties>
                <TabStrip>
                  <Tab>属性编辑</Tab>
                </TabStrip>
                <TableFrame>
                  <Table>
                    <colgroup>
                      <col width={20} />
                      <col width={191} />
                      <col width={127} />
                      <col width={30} />
                    </colgroup>
                    <thead>
                      <tr>
                        <HeadCell />
                        <HeadCell>属性名称</HeadCell>
                        <HeadCell $value>属性值</HeadCell>
                        <HeadCell>附</HeadCell>
                      </tr>
                    </thead>
                    <tbody>
                      {propRows.map(r => (
                        <tr key={r.n}>
                          <NumCell $on={r.on}>{r.n}</NumCell>
                          {r.group ? (
                            <GroupNameCell $tone={r.tone}>
                              <GroupInner>
                                <PlusBox>+</PlusBox>
                                {r.name}
                              </GroupInner>
                            </GroupNameCell>
                          ) : (
                            <NameCell $tone={r.tone} $on={r.on}>
                              <CellText>{mixed(r.name, 13)}</CellText>
                            </NameCell>
                          )}
                          <ValueCell $on={r.on}>
                            <CellText>{r.value && mixed(r.value, 13)}</CellText>
                          </ValueCell>
                          <CheckCell>{r.check && <CheckBox />}</CheckCell>
                        </tr>
                      ))}
                    </tbody>
                  </Table>
                </TableFrame>
              </Properties>
            </Panels>
          </Main>
        </Workspace>

        <Dialog>
          <DialogTitle>
            选择参数化图形
            <CloseButton>X</CloseButton>
          </DialogTitle>
          <DialogBody>
            <GroupBox>
              <GroupLegend>图形</GroupLegend>
              <GroupContent>
                <ShapeGrid>
                  {shapes.map((s, i) => (
                    <ShapeCell key={s.caption} $picked={i === 0}>
                      <ShapeTile>
                        <ShapeSvg width={140} height={122} viewBox="0 0 140 122">
                          {s.art}
                        </ShapeSvg>
                        <ShapeCaption $drop={s.drop}>{s.caption}</ShapeCaption>
                      </ShapeTile>
                    </ShapeCell>
                  ))}
                </ShapeGrid>
                <ScrollBar>
                  <ScrollArrow />
                  <ScrollThumb>
                    <ThumbGrip />
                  </ScrollThumb>
                  <ScrollArrow $down />
                </ScrollBar>
              </GroupContent>
            </GroupBox>
            <DialogActions>
              <DialogButton $primary>确定</DialogButton>
              <DialogButton>取消</DialogButton>
            </DialogActions>
          </DialogBody>
        </Dialog>

        <RedFrame $l={115} $t={70} $w={156} $h={110} />
        <RedFrame $l={339} $t={132} $w={410} $h={256} />
        <RedFrame $l={812} $t={84} $w={610} $h={650} />
        <RedNote>选择相应的柱帽类型</RedNote>
        <PinBadge>
          <PinMark>P</PinMark>
        </PinBadge>
      </Page>
    </>
  );
}
